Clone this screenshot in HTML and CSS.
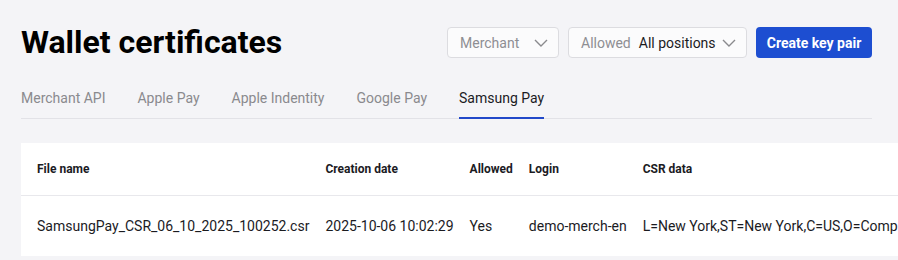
FILE: index.html
```html
<!DOCTYPE html>
<html lang="en">
<head>
    <meta charset="UTF-8">
    <title>Wallet certificates</title>
    <link rel="stylesheet" href="styles.css">
</head>
<body>
<div class="page">
    <div class="page-header">
        <h1 class="title">Wallet certificates</h1>
        <div class="controls">
            <div class="select select-merchant">
                <span class="select-placeholder">Merchant</span>
                <svg class="chevron" width="14" height="8" viewBox="0 0 14 8"><path d="M1 1l6 6 6-6" fill="none" stroke="#8a8a8e" stroke-width="1.4"/></svg>
            </div>
            <div class="select select-allowed">
                <span class="select-placeholder">Allowed</span>
                <span class="select-value">All positions</span>
                <svg class="chevron" width="14" height="8" viewBox="0 0 14 8"><path d="M1 1l6 6 6-6" fill="none" stroke="#8a8a8e" stroke-width="1.4"/></svg>
            </div>
            <button class="button-primary">Create key pair</button>
        </div>
    </div>

    <div class="tabs">
        <div class="tab">Merchant API</div>
        <div class="tab">Apple Pay</div>
        <div class="tab">Apple Indentity</div>
        <div class="tab">Google Pay</div>
        <div class="tab tab-active">Samsung Pay</div>
    </div>

    <div class="card">
        <table class="cert-table">
            <thead>
            <tr>
                <th>File name</th>
                <th>Creation date</th>
                <th>Allowed</th>
                <th>Login</th>
                <th>CSR data</th>
            </tr>
            </thead>
            <tbody>
            <tr>
                <td>SamsungPay_CSR_06_10_2025_100252.csr</td>
                <td>2025-10-06 10:02:29</td>
                <td>Yes</td>
                <td>demo-merch-en</td>
                <td>L=New York,ST=New York,C=US,O=Company,OU=Payments,CN=demo-merch-en</td>
            </tr>
            </tbody>
        </table>
    </div>
</div>
</body>
</html>
```

FILE: styles.css
```css
body {
    margin: 0;
    background-color: #f4f4f7;
    font-family: Roboto, "Liberation Sans", sans-serif;
    color: #1b1b1f;
    overflow: hidden;
}

.page {
    padding: 27px 0 0 21px;
}

.page-header {
    width: 851px;
    display: flex;
    align-items: center;
    justify-content: space-between;
}

.title {
    margin: 0;
    font-size: 32px;
    font-weight: 700;
    color: #000;
    line-height: 31px;
}

.controls {
    display: flex;
    gap: 9px;
}

.select {
    box-sizing: border-box;
    height: 31px;
    display: flex;
    align-items: center;
    padding: 0 10px 0 12px;
    background-color: #fbfbfc;
    border: 1px solid #dcdce0;
    border-radius: 4px;
    font-size: 14px;
}

.select-merchant {
    width: 112px;
    justify-content: space-between;
}

.select-allowed {
    width: 179px;
}

.select-placeholder {
    color: #8e8e93;
}

.select-value {
    margin-left: 8px;
    color: #1b1b1f;
}

.select-allowed .chevron {
    margin-left: auto;
}

.button-primary {
    box-sizing: border-box;
    height: 31px;
    width: 116px;
    border: none;
    border-radius: 4px;
    background-color: #1d4ed1;
    color: white;
    font-family: inherit;
    font-size: 14px;
    font-weight: 700;
    padding: 0;
}

.tabs {
    width: 851px;
    display: flex;
    gap: 32px;
    margin-top: 27px;
    border-bottom: 1px solid #e2e2e7;
}

.tab {
    font-size: 14px;
    color: #8a8a8e;
    line-height: 18px;
    padding: 4px 0 10px;
    border-bottom: 2px solid transparent;
    margin-bottom: -1px;
}

.tab-active {
    color: #1b1b1f;
    border-bottom-color: #2148c9;
}

.card {
    margin-top: 24px;
    background-color: white;
    width: max-content;
}

.cert-table {
    border-collapse: collapse;
    white-space: nowrap;
}

.cert-table th {
    height: 52px;
    text-align: left;
    font-size: 12px;
    font-weight: 700;
    color: #1b1b1f;
    padding: 0 16px 0 0;
    border-bottom: 1px solid #e8e8ec;
}

.cert-table td {
    height: 60px;
    font-size: 14px;
    padding: 0 16px 0 0;
}

.cert-table th:first-child,
.cert-table td:first-child {
    padding-left: 16px;
}
```
